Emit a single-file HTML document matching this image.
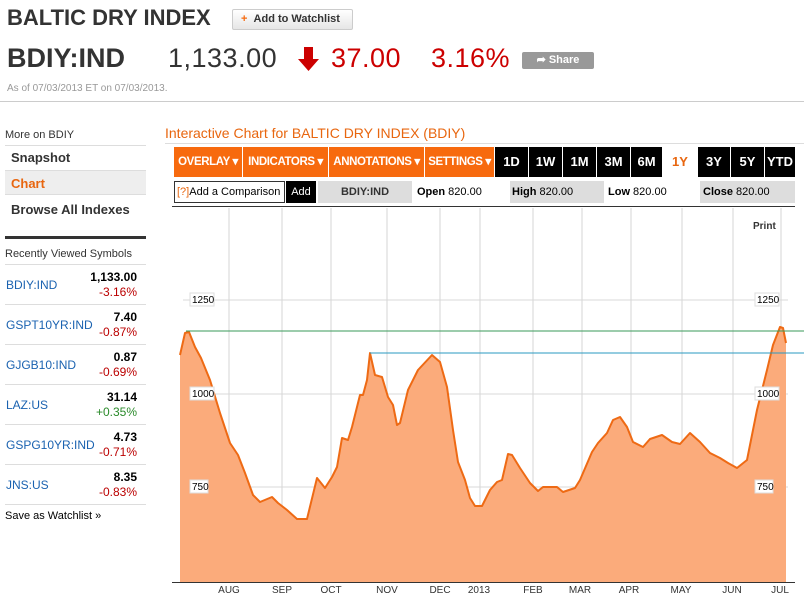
<!DOCTYPE html>
<html><head><meta charset="utf-8">
<style>
*{margin:0;padding:0;box-sizing:border-box}
body{width:804px;height:601px;background:#fff;font-family:"Liberation Sans",Arial,sans-serif;position:relative;overflow:hidden;color:#333}
.a{position:absolute;white-space:nowrap}
.btn{position:absolute;top:147px;height:30px;color:#fff;font-weight:bold;font-size:11.5px;line-height:30px;text-align:center}
.or{background:#f76a0e;letter-spacing:-0.4px}
.bk{background:#000;font-size:13px}
.gray{position:absolute;top:181px;height:22px;background:#ddd}
.lbl{position:absolute;font-size:11px;color:#000;line-height:22px;top:181px}
.sb{position:absolute;left:5px;width:141px;border-top:1px solid #ddd}
.rv{position:absolute;left:5px;width:141px;height:40px;border-top:1px solid #ddd}
.rv .n{position:absolute;left:1px;top:13px;font-size:12px;color:#1a62b0}
.rv .p{position:absolute;right:9px;top:5px;font-size:12px;font-weight:bold;color:#000}
.rv .c{position:absolute;right:9px;top:20px;font-size:12px;color:#b00}
</style></head><body>
<div class="a" style="left:7px;top:5px;font-size:22px;font-weight:bold;color:#333">BALTIC DRY INDEX</div>
<div class="a" style="left:232px;top:9px;width:121px;height:21px;border:1px solid #ccc;border-radius:2px;background:linear-gradient(#fff,#e6e6e6);font-size:11px;font-weight:bold;line-height:19px;color:#333;padding-left:8px"><span style="color:#f76a0e">+</span>&nbsp;&nbsp;Add to Watchlist</div>
<div class="a" style="left:7px;top:43px;font-size:27px;font-weight:bold;color:#333">BDIY:IND</div>
<div class="a" style="left:168px;top:43px;font-size:27px;color:#333;letter-spacing:0.5px">1,133.00</div>
<svg class="a" style="left:298px;top:47px" width="21" height="24"><path d="M6 0h9v12h6L10.5 24 0 12h6z" fill="#c00"/></svg>
<div class="a" style="left:331px;top:43px;font-size:27px;color:#c00;letter-spacing:0.5px">37.00</div>
<div class="a" style="left:431px;top:43px;font-size:27px;color:#c00;letter-spacing:0.5px">3.16%</div>
<div class="a" style="left:522px;top:52px;width:72px;height:17px;background:#999;border-radius:2px;color:#fff;font-size:11px;font-weight:bold;line-height:17px;text-align:center">&#x27A6; Share</div>
<div class="a" style="left:7px;top:83px;font-size:10px;color:#999">As of 07/03/2013 ET on 07/03/2013.</div>
<div class="a" style="left:0;top:101px;width:804px;border-top:1px solid #ccc"></div>

<div class="a" style="left:5px;top:129px;font-size:11px;color:#333">More on BDIY</div>
<div class="sb" style="top:145px"></div>
<div class="a" style="left:11px;top:150px;font-size:13px;font-weight:bold;color:#333">Snapshot</div>
<div class="a" style="left:5px;top:170px;width:141px;height:25px;background:#eee;border-top:1px solid #ddd;border-bottom:1px solid #ddd"></div>
<div class="a" style="left:11px;top:176px;font-size:13px;font-weight:bold;color:#e8660f">Chart</div>
<div class="a" style="left:11px;top:202px;font-size:13px;font-weight:bold;color:#333">Browse All Indexes</div>
<div class="a" style="left:5px;top:236px;width:141px;height:3px;background:#333"></div>
<div class="a" style="left:5px;top:248px;font-size:11px;color:#333">Recently Viewed Symbols</div>
<div class="rv" style="top:264px"><span class="n">BDIY:IND</span><span class="p">1,133.00</span><span class="c">-3.16%</span></div>
<div class="rv" style="top:304px"><span class="n">GSPT10YR:IND</span><span class="p">7.40</span><span class="c">-0.87%</span></div>
<div class="rv" style="top:344px"><span class="n">GJGB10:IND</span><span class="p">0.87</span><span class="c">-0.69%</span></div>
<div class="rv" style="top:384px"><span class="n">LAZ:US</span><span class="p">31.14</span><span class="c" style="color:#2a8a2a">+0.35%</span></div>
<div class="rv" style="top:424px"><span class="n">GSPG10YR:IND</span><span class="p">4.73</span><span class="c">-0.71%</span></div>
<div class="rv" style="top:464px"><span class="n">JNS:US</span><span class="p">8.35</span><span class="c">-0.83%</span></div>
<div class="sb" style="top:504px"></div>
<div class="a" style="left:5px;top:510px;font-size:11px;color:#000">Save as Watchlist &#187;</div>

<div class="a" style="left:165px;top:125px;font-size:14px;color:#e8660f">Interactive Chart for BALTIC DRY INDEX (BDIY)</div>
<div class="a" style="left:165px;top:143px;width:639px;border-top:1px solid #ddd"></div>
<div class="btn or" style="left:174px;width:68px">OVERLAY ▾</div>
<div class="btn or" style="left:243px;width:85px">INDICATORS ▾</div>
<div class="btn or" style="left:329px;width:95px">ANNOTATIONS ▾</div>
<div class="btn or" style="left:425px;width:69px">SETTINGS ▾</div>
<div class="btn bk" style="left:495px;width:33px">1D</div>
<div class="btn bk" style="left:529px;width:33px">1W</div>
<div class="btn bk" style="left:563px;width:33px">1M</div>
<div class="btn bk" style="left:597px;width:33px">3M</div>
<div class="btn bk" style="left:631px;width:31px">6M</div>
<div class="btn" style="left:663px;width:34px;color:#e8660f;font-size:13px">1Y</div>
<div class="btn bk" style="left:698px;width:32px">3Y</div>
<div class="btn bk" style="left:731px;width:33px">5Y</div>
<div class="btn bk" style="left:765px;width:30px">YTD</div>

<div class="a" style="left:174px;top:181px;width:111px;height:22px;border:1px solid #333;font-size:11px;line-height:20px;color:#000;padding-left:2px"><span style="color:#e8660f">[?]</span>Add a Comparison</div>
<div class="a" style="left:286px;top:181px;width:30px;height:22px;background:#000;color:#fff;font-size:11px;line-height:22px;text-align:center">Add</div>
<div class="gray" style="left:318px;width:94px;text-align:center;font-size:11px;font-weight:bold;line-height:22px;color:#333">BDIY:IND</div>
<div class="lbl" style="left:417px"><b>Open</b> 820.00</div>
<div class="gray" style="left:510px;width:94px"></div>
<div class="lbl" style="left:512px"><b>High</b> 820.00</div>
<div class="lbl" style="left:608px"><b>Low</b> 820.00</div>
<div class="gray" style="left:700px;width:95px"></div>
<div class="lbl" style="left:703px"><b>Close</b> 820.00</div>
<div class="a" style="left:172px;top:206px;width:623px;border-top:1px solid #333"></div>

<svg class="a" style="left:0;top:0" width="804" height="601" font-family="Liberation Sans,Arial,sans-serif">
<g stroke="#e4e4e4" stroke-width="1.5">
<line x1="229" y1="208" x2="229" y2="582"/><line x1="282" y1="208" x2="282" y2="582"/><line x1="331" y1="208" x2="331" y2="582"/><line x1="387" y1="208" x2="387" y2="582"/><line x1="440" y1="208" x2="440" y2="582"/><line x1="480" y1="208" x2="480" y2="582"/><line x1="533" y1="208" x2="533" y2="582"/><line x1="582" y1="208" x2="582" y2="582"/><line x1="631" y1="208" x2="631" y2="582"/><line x1="682" y1="208" x2="682" y2="582"/><line x1="733" y1="208" x2="733" y2="582"/><line x1="781" y1="208" x2="781" y2="582"/>
</g>
<g stroke="#d8d8d8"><line x1="183" y1="300" x2="788" y2="300"/><line x1="183" y1="394" x2="788" y2="394"/><line x1="183" y1="487" x2="788" y2="487"/></g>
<path d="M180 582L180 355L185 333L189 332L195 347L201 358L210 380L220 413L230 443L238 455L245 473L253 495L260 502L272 497L278 503L287 510L297 519L307 519L317 478L325 488L332 477L337 467L342 438L348 440L352 427L360 395L363 395L367 380L370 353L375 375L382 377L388 397L393 405L397 425L400 423L408 390L418 370L432 355L440 362L447 387L453 430L458 462L465 480L470 498L475 506L482 506L490 490L497 482L502 480L508 454L512 455L520 468L530 483L538 491L543 487L557 487L563 492L575 488L580 480L592 452L598 443L607 433L613 420L620 417L627 427L633 442L643 447L650 439L662 435L672 442L680 444L690 433L700 442L710 453L720 458L728 463L737 468L747 460L757 410L767 370L773 345L780 327L783 328L786 343L786 582Z" fill="#fbab7b"/>
<path d="M180 355L185 333L189 332L195 347L201 358L210 380L220 413L230 443L238 455L245 473L253 495L260 502L272 497L278 503L287 510L297 519L307 519L317 478L325 488L332 477L337 467L342 438L348 440L352 427L360 395L363 395L367 380L370 353L375 375L382 377L388 397L393 405L397 425L400 423L408 390L418 370L432 355L440 362L447 387L453 430L458 462L465 480L470 498L475 506L482 506L490 490L497 482L502 480L508 454L512 455L520 468L530 483L538 491L543 487L557 487L563 492L575 488L580 480L592 452L598 443L607 433L613 420L620 417L627 427L633 442L643 447L650 439L662 435L672 442L680 444L690 433L700 442L710 453L720 458L728 463L737 468L747 460L757 410L767 370L773 345L780 327L783 328L786 343" fill="none" stroke="#ee6a14" stroke-width="2" stroke-linejoin="round"/>
<line x1="186" y1="331" x2="804" y2="331" stroke="#3a9a5a" stroke-width="1"/>
<line x1="370" y1="353" x2="804" y2="353" stroke="#2a9ac0" stroke-width="1"/>
<line x1="172" y1="582.5" x2="795" y2="582.5" stroke="#333"/>
<g font-size="10" fill="#000">
<rect x="190" y="293" width="24" height="13" fill="#fff" stroke="#ddd"/><text x="192" y="303">1250</text>
<rect x="190" y="387" width="24" height="13" fill="#fff" stroke="#ddd"/><text x="192" y="397">1000</text>
<rect x="190" y="480" width="18" height="13" fill="#fff" stroke="#ddd"/><text x="192" y="490">750</text>
<rect x="755" y="293" width="24" height="13" fill="#fff" stroke="#ddd"/><text x="757" y="303">1250</text>
<rect x="755" y="387" width="24" height="13" fill="#fff" stroke="#ddd"/><text x="757" y="397">1000</text>
<rect x="755" y="480" width="18" height="13" fill="#fff" stroke="#ddd"/><text x="757" y="490">750</text>
<text x="753" y="229" font-weight="bold" fill="#333">Print</text>
</g>
<g font-size="10" fill="#333" text-anchor="middle">
<text x="229" y="593">AUG</text><text x="282" y="593">SEP</text><text x="331" y="593">OCT</text><text x="387" y="593">NOV</text><text x="440" y="593">DEC</text><text x="479" y="593">2013</text><text x="533" y="593">FEB</text><text x="580" y="593">MAR</text><text x="629" y="593">APR</text><text x="681" y="593">MAY</text><text x="732" y="593">JUN</text><text x="780" y="593">JUL</text>
</g>
</svg>
</body></html>
